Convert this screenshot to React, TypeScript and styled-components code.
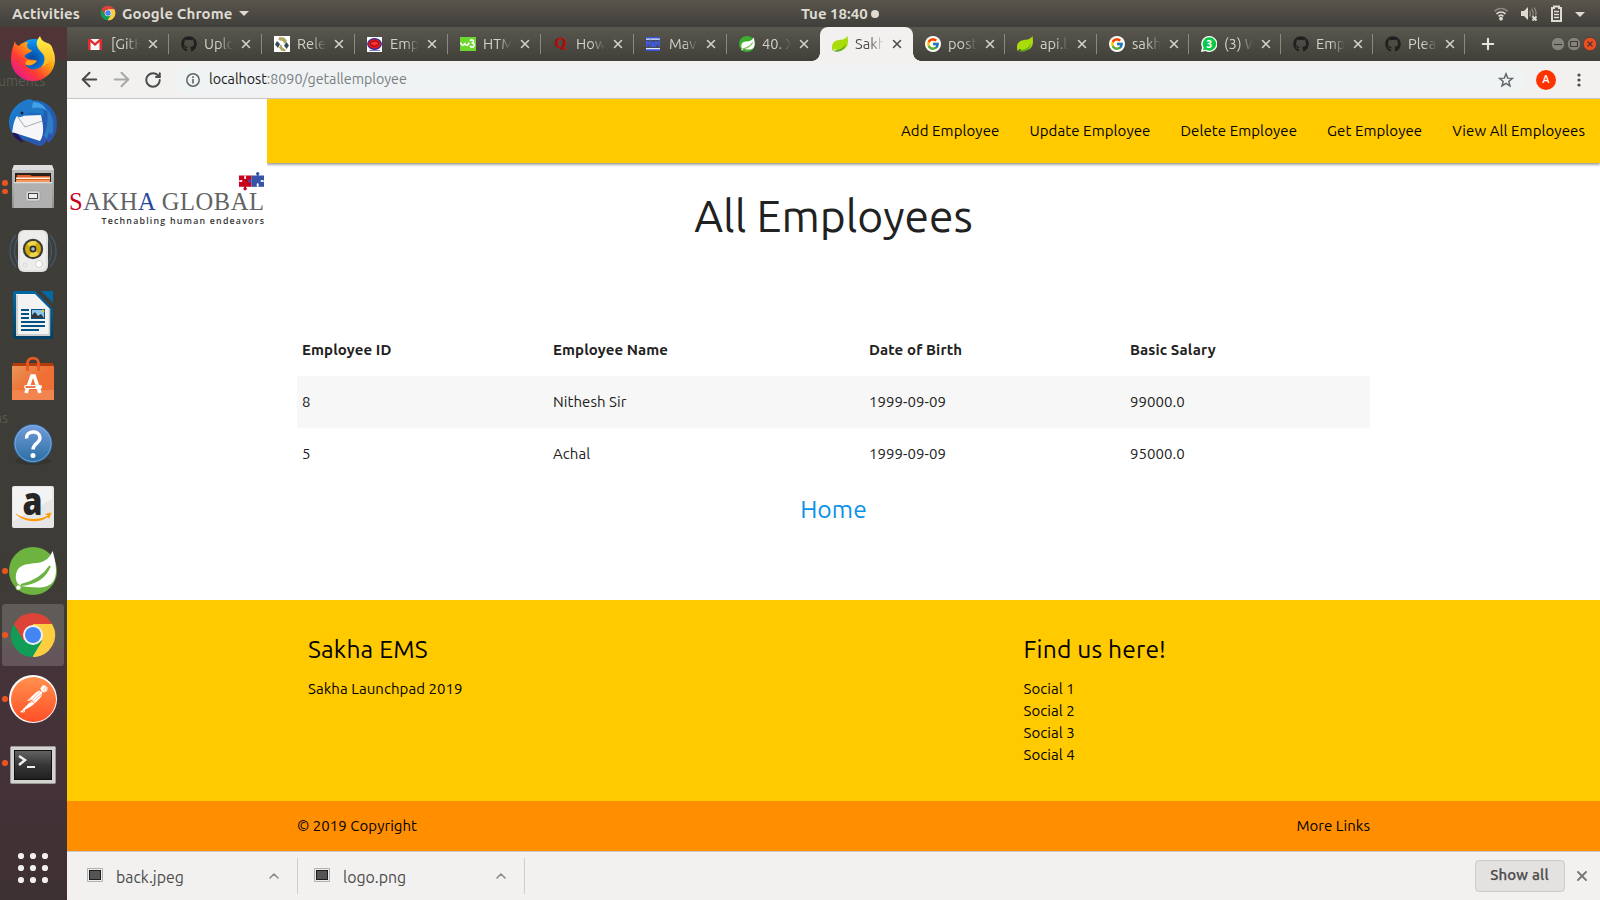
import React from "react";
import styled, { createGlobalStyle, css } from "styled-components";
import { FaGithub } from "react-icons/fa";
import { FcGoogle } from "react-icons/fc";
import { SiPostman } from "react-icons/si";
import { ArrowLeft, ArrowRight, ChevronUp, Plus, RotateCw, X } from "lucide-react";

const GlobalStyle = createGlobalStyle`
  * { box-sizing: border-box; }
  html, body { margin: 0; padding: 0; overflow: hidden; }
  body { font-family: Ubuntu, "Noto Sans", "Open Sans", sans-serif; font-size: 15px; color: #212121; background: #fff; }
  svg { display: block; flex: none; }
`;

const Desktop = styled.div`
  width: 1600px;
  height: 900px;
  display: flex;
  flex-direction: column;
`;

/* ---------- top panel ---------- */

const Panel = styled.header`
  height: 27px;
  flex: none;
  display: grid;
  grid-template-columns: 789px auto 1fr;
  align-items: center;
  padding: 0 15px 0 12px;
  background: linear-gradient(#59554d, #403f3a);
  color: #dfdbd2;
  font-size: 15px;
  font-weight: 600;
`;
const PanelGroup = styled.div<{ $end?: boolean }>`
  display: flex;
  align-items: center;
  justify-content: ${(p) => (p.$end ? "flex-end" : "flex-start")};
`;
const PanelLabel = styled.span<{ $gap?: number; $track?: number }>`
  margin-left: ${(p) => p.$gap ?? 0}px;
  letter-spacing: ${(p) => p.$track ?? 0.12}px;
  line-height: 17px;
  padding-bottom: 1px;
  white-space: nowrap;
`;
const Caret = styled.i`
  border: 5px solid transparent;
  border-top-color: #dfdbd2;
  border-bottom: 0;
  margin-left: 6px;
`;
const NoticeDot = styled.i`
  width: 8px;
  height: 8px;
  border-radius: 50%;
  margin-left: 3px;
  background: #dfdbd2;
`;

/* ---------- dock ---------- */

const Workspace = styled.div`
  flex: 1;
  min-height: 0;
  display: flex;
`;
const Dock = styled.nav`
  position: relative;
  width: 67px;
  flex: none;
  display: flex;
  flex-direction: column;
  background: linear-gradient(#513436 0, #4e3537 32px, #3f3d37 34px, #3e3c37 520px, #403a37 619px, #45333a 622px, #443238 750px, #3d3032 100%);
`;
const Slot = styled.div<{ $active?: boolean }>`
  height: 62px;
  margin: 1px 3px 1px 2px;
  display: flex;
  align-items: center;
  justify-content: center;
  position: relative;
  border-radius: 3px;
  ${(p) => p.$active && css`background: rgba(255, 255, 255, 0.17);`}
`;
const Running = styled.div`
  position: absolute;
  left: 0;
  top: 0;
  height: 100%;
  display: flex;
  flex-direction: column;
  justify-content: center;
  gap: 3px;
`;
const Dot = styled.i`
  width: 5.5px;
  height: 5.5px;
  border-radius: 50%;
  background: #e95420;
`;
const AppsSlot = styled(Slot)`
  margin-top: auto;
`;
const Ghost = styled.span<{ $top: number; $left: number }>`
  position: absolute;
  top: ${(p) => p.$top}px;
  left: ${(p) => p.$left}px;
  color: #5b5953;
  font-size: 14px;
  line-height: 16px;
`;

/* ---------- browser ---------- */

const Browser = styled.main`
  flex: 1;
  min-width: 0;
  display: flex;
  flex-direction: column;
  background: #fff;
`;
const TabStrip = styled.div`
  height: 34px;
  flex: none;
  display: flex;
  align-items: center;
  padding-left: 9px;
  background: linear-gradient(#59574e, #403f39);
`;
const TabBox = styled.div<{ $active?: boolean; $narrow?: boolean; $plain?: boolean }>`
  position: relative;
  width: ${(p) => (p.$narrow ? 92 : 93)}px;
  height: 34px;
  flex: none;
  display: flex;
  align-items: center;
  padding-left: 12px;
  color: ${(p) => (p.$active ? "#4c4c4c" : "#d3d0c8")};
  &::after {
    content: "";
    position: absolute;
    right: 0;
    top: 7px;
    height: 20px;
    width: 1px;
    background: ${(p) => (p.$active || p.$plain ? "transparent" : "#8b8981")};
  }
  ${(p) =>
    p.$active &&
    css`
      background: #f2f1f0;
      border-radius: 8px 8px 0 0;
      &::before, &::after {
        content: "";
        position: absolute;
        top: auto;
        bottom: 0;
        width: 8px;
        height: 8px;
      }
      &::before { left: -8px; background: radial-gradient(circle at 0 0, transparent 7.5px, #f2f1f0 8px); }
      &::after { right: -8px; background: radial-gradient(circle at 100% 0, transparent 7.5px, #f2f1f0 8px); }
    `}
`;
const Favicon = styled.span`
  width: 16px;
  height: 16px;
  flex: none;
`;
const TabTitle = styled.span`
  width: 29px;
  margin-left: 7px;
  overflow: hidden;
  white-space: nowrap;
  font-size: 14.67px;
  line-height: 20px;
  -webkit-mask-image: linear-gradient(90deg, #000 52%, transparent);
  mask-image: linear-gradient(90deg, #000 52%, transparent);
`;
const TabClose = styled(X)`
  margin-left: 6px;
`;
const NewTab = styled(Plus)`
  margin-left: 14px;
  color: #e8e5de;
`;
const WindowButtons = styled.div`
  margin-left: auto;
  display: flex;
  gap: 2px;
  padding-right: 3.5px;
`;
const Toolbar = styled.div`
  height: 38px;
  flex: none;
  display: flex;
  align-items: center;
  padding: 0 14px 0 10px;
  background: #f2f1f0;
  border-bottom: 1px solid #c6c6c6;
  color: #4a4a4a;
`;
const ToolIcons = styled.div`
  width: 98px;
  display: grid;
  grid-template-columns: 24px 24px 24px;
  gap: 8px;
  align-items: center;
  justify-items: center;
  flex: none;
`;
const Omnibox = styled.div`
  flex: 1;
  height: 30px;
  margin-right: 12px;
  display: flex;
  align-items: center;
  padding: 0 10px;
  border-radius: 15px;
  background: #eff3f4;
  color: #7b7f82;
  font-size: 14.3px;
  letter-spacing: -0.04px;
`;
const Url = styled.span`
  flex: 1;
  margin-left: 8px;
  padding-bottom: 2px;
`;
const Host = styled.span`
  color: #222;
`;
const Avatar = styled.div`
  width: 20px;
  height: 20px;
  border-radius: 50%;
  background: #ff3300;
  color: #fff;
  font: 500 11px/20px Roboto, sans-serif;
  text-align: center;
  margin-right: 16px;
`;

/* ---------- web page ---------- */

const Page = styled.section`
  height: 752px;
  flex: none;
  display: flex;
  flex-direction: column;
`;
const Masthead = styled.div`
  height: 64px;
  flex: none;
  display: flex;
  align-items: flex-start;
`;
const LogoBox = styled.div`
  width: 200px;
  height: 140px;
  flex: none;
  background: #fff;
`;
const NavBar = styled.ul`
  flex: 1;
  height: 64px;
  margin: 0;
  padding: 0;
  list-style: none;
  display: flex;
  justify-content: flex-end;
  background: #ffca00;
  box-shadow: 0 2px 2px rgba(0, 0, 0, 0.22), 0 1px 3px rgba(0, 0, 0, 0.25);
  clip-path: inset(0 0 -6px 0);
`;
const NavItem = styled.li`
  padding: 0 15px;
  line-height: 64px;
  color: #000;
  letter-spacing: 0.09px;
`;
const Body = styled.div`
  width: 1073px;
  margin: 0 auto;
  flex: 1;
  display: flex;
  flex-direction: column;
  align-items: center;
`;
const Heading = styled.h1`
  margin: 27px 0 0;
  height: 52px;
  line-height: 52px;
  font-size: 44.4px;
  font-weight: 400;
`;
const Table = styled.table`
  width: 100%;
  margin-top: 82px;
  border-collapse: collapse;
  table-layout: fixed;
`;
const Row = styled.tr<{ $striped?: boolean }>`
  height: 52px;
  background: ${(p) => (p.$striped ? "#f7f7f7" : "transparent")};
`;
const Head = styled.th<{ $w: number }>`
  width: ${(p) => p.$w}px;
  padding: 0 5px 2px;
  text-align: left;
  font-size: 15px;
  letter-spacing: 0.1px;
`;
const Cell = styled.td`
  padding: 0 5px 2px;
  letter-spacing: 0.06px;
`;
const HomeLink = styled.a`
  margin-top: 12px;
  font-size: 24.6px;
  line-height: 34px;
  letter-spacing: 0.1px;
  color: #0b92e8;
`;
const Footer = styled.footer`
  height: 201px;
  flex: none;
  padding: 32px 241px 0;
  display: grid;
  grid-template-columns: 715.5px 1fr;
  background: #ffca00;
  color: #000;
`;
const FooterTitle = styled.h5`
  margin: 0 0 12px;
  font-size: 24.6px;
  font-weight: 400;
  line-height: 34px;
  letter-spacing: 0.15px;
`;
const FooterLine = styled.div`
  line-height: 22px;
  letter-spacing: 0.06px;
`;
const Copyright = styled.div`
  height: 50px;
  flex: none;
  padding: 0 230px 1px;
  display: flex;
  justify-content: space-between;
  align-items: center;
  background: #ff8f00;
  color: #000;
  letter-spacing: 0.04px;
`;

/* ---------- downloads ---------- */

const Downloads = styled.div`
  flex: 1;
  display: flex;
  align-items: center;
  border-top: 1px solid #c9c8c6;
  background: #f2f1f0;
  color: #4c4c4c;
`;
const DownloadItem = styled.div<{ $w: number; $lead: number }>`
  width: ${(p) => p.$w}px;
  height: 36px;
  display: flex;
  align-items: center;
  padding: 0 15px 0 ${(p) => p.$lead}px;
  border-right: 1px solid #cfcecc;
  font-size: 15.9px;
`;
const FileName = styled.span`
  flex: 1;
  margin-left: 13px;
  padding-top: 1px;
`;
const ShowAll = styled.button`
  width: 90px;
  height: 32px;
  margin: 0 0 1px auto;
  padding: 0 0 2px;
  border: 1px solid #cccbc9;
  border-radius: 4px;
  background: #e4e2e0;
  color: #4c4c4c;
  font: 500 15px Ubuntu, "Noto Sans", sans-serif;
  letter-spacing: 0.2px;
  -webkit-text-stroke: 0.25px #4c4c4c;
`;
const BarClose = styled(X)`
  margin: 0 10px 0 9.5px;
  color: #777;
`;

/* ---------- drawings ---------- */

const ChromeLogo = ({ size }: { size: number }) => (
  <svg width={size} height={size} viewBox="0 0 48 48">
    <path d="M24 24 4.900 13A22 22 0 0 1 43.100 13Z" fill="#db4437" />
    <path d="M24 24V13H43.100A22 22 0 0 1 24 46Z" fill="#ffcd40" />
    <path d="M14.500 29.500 4.900 13A22 22 0 0 0 23.500 46L33.500 29.500Z" fill="#0f9d58" />
    <path d="M4.900 13 14.500 29.500 24 13Z" fill="#db4437" />
    <path d="M33.500 29.500 24 46A22 22 0 0 0 43.100 14H24Z" fill="#ffcd40" />
    <circle cx="24" cy="24" r="10" fill="#f1f1f1" />
    <circle cx="24" cy="24" r="8" fill="#4285f4" />
  </svg>
);

const FirefoxLogo = () => (
  <svg width="48" height="48" viewBox="0 0 48 48">
    <defs>
      <linearGradient id="ffx" x1="1" y1="0" x2="0.1" y2="0.9">
        <stop offset="0.1" stopColor="#fff44f" />
        <stop offset="0.4" stopColor="#ffa010" />
        <stop offset="0.7" stopColor="#ff3a35" />
        <stop offset="1" stopColor="#e3169a" />
      </linearGradient>
      <radialGradient id="ffb" cx="0.45" cy="0.6" r="0.6">
        <stop offset="0" stopColor="#06439b" />
        <stop offset="1" stopColor="#0a9dff" />
      </radialGradient>
      <linearGradient id="ffy" x1="0" y1="0" x2="0" y2="1">
        <stop offset="0" stopColor="#fff44f" />
        <stop offset="1" stopColor="#ffaf14" />
      </linearGradient>
    </defs>
    <circle cx="25" cy="21" r="17" fill="url(#ffb)" />
    <path d="M6 6C4 12 2 17 2 25a22 21 0 0 0 44 0c0-8-3-13-7-17 2 9 0 17-5 22-5 6-15 6-18-1 4 2 8 0 12-3-3-2-6-1-9-2-2-1-4-2-3-4l7-4c-1-2-5-1-5-6l1-3c-4 0-7 1-9 4-3-1-4-3-4-5z" fill="url(#ffx)" />
    <path d="M31 1c-6 7-3 12 2 17 4 4 3 10-1 14 10-3 14-12 11-20-1-3-5-4-7-5-3-1-4-3-5-6z" fill="url(#ffy)" />
    <path d="M16 29c4 3 9 1 12-3-4-1-6 0-10-1z" fill="#ffa21c" />
  </svg>
);

const ThunderbirdLogo = () => (
  <svg width="48" height="48" viewBox="0 0 48 48">
    <defs>
      <linearGradient id="tb" x1="0" y1="0" x2="1" y2="1">
        <stop offset="0" stopColor="#1b8bdc" />
        <stop offset="0.5" stopColor="#1d60b8" />
        <stop offset="1" stopColor="#3550a8" />
      </linearGradient>
    </defs>
    <path d="M0 24C0 11 10 2 21 0l3 1.500C38 1 48 12 48 24c0 10-4 17-9 20l-1-3c-2 4-5 6-8 6L5 37C2 33 0 29 0 24z" fill="url(#tb)" />
    <path d="M3 34c3 6 8 9 12 9L8 34z" fill="#24165f" />
    <path d="M3 35C4 27 5 21 8 17l24-1c2 9 4 19-1 26L3 33z" fill="#f6f6f8" />
    <path d="M8 17 16 28l17-6" fill="none" stroke="#a9abb2" strokeWidth="1" />
    <path d="M9 18c0-8 5-15 11-18l3 2c9 1 12 8 12 15-7-4-12-4-16-3-3 1-5 5-10 4z" fill="#1f78c8" />
    <path d="M24 3c7 0 12 4 14 9-5-4-10-4-15-3z" fill="#45a1e6" />
    <path d="M38 10c6 6 8 15 5 26l-3-3-2 7-3-3c4-9 4-18 3-27z" fill="#2f7cc4" />
    <circle cx="13" cy="14" r="1.500" fill="#10213d" />
  </svg>
);

const FilesLogo = () => (
  <svg width="48" height="48" viewBox="0 0 48 48">
    <defs>
      <linearGradient id="fl" x1="0" y1="0" x2="0" y2="1">
        <stop offset="0" stopColor="#c4c4c4" />
        <stop offset="1" stopColor="#8f8f8f" />
      </linearGradient>
    </defs>
    <path d="M5 2h38l2 6v37H3V8z" fill="url(#fl)" />
    <path d="M5 2h38l2 5H3z" fill="#dedede" />
    <rect x="6" y="10" width="36" height="10" fill="#2c211b" />
    <path d="M8 12h13l2 1h18v8H7z" fill="#e0602c" />
    <path d="M7 14.500h34v1.500H7z" fill="#fff0d8" />
    <path d="M7 17h34v3H7z" fill="#f0995a" />
    <rect x="5" y="19" width="38" height="26" fill="#b0b0b0" />
    <path d="M5 19h38v1.200H5z" fill="#dedede" />
    <rect x="17" y="28" width="14" height="10" rx="2" fill="#d7d7d7" stroke="#9a9a9a" strokeWidth="0.600" />
    <rect x="19.500" y="30.500" width="9" height="5" fill="#eee" stroke="#444" />
  </svg>
);

const SpeakerLogo = () => (
  <svg width="48" height="48" viewBox="0 0 48 48">
    <g fill="none" stroke="#44586c" strokeWidth="1.400">
      <path d="M7 8c-8 9-8 23 0 32M10 10c-6 8-6 20 0 28M41 8c8 9 8 23 0 32M38 10c6 8 6 20 0 28" />
    </g>
    <rect x="9" y="3" width="30" height="42" rx="6" fill="#e0e0de" />
    <rect x="11" y="4" width="26" height="39" rx="5" fill="#f5f5f4" opacity=".6" />
    <circle cx="24" cy="22" r="10.200" fill="#3d3c3a" />
    <circle cx="24" cy="22" r="8" fill="#cfaa0c" />
    <path d="M18 17a8 8 0 0 1 10-2l-4 7zM30 27a8 8 0 0 1-10 2l4-7z" fill="#eed64a" />
    <circle cx="24" cy="22" r="3.400" fill="#2d2e30" />
    <circle cx="24" cy="22" r="1.800" fill="#aebac6" />
    <circle cx="30" cy="37" r="3.500" fill="#fff" stroke="#c8c8c8" strokeWidth="0.800" />
    <circle cx="16" cy="38" r="2" fill="none" stroke="#d4d4d4" strokeWidth="0.700" />
  </svg>
);

const WriterLogo = () => (
  <svg width="48" height="48" viewBox="0 0 48 48">
    <defs>
      <linearGradient id="wr" x1="0" y1="0" x2="0" y2="1">
        <stop offset="0" stopColor="#0369a3" />
        <stop offset="1" stopColor="#013f66" />
      </linearGradient>
    </defs>
    <path d="M6 0h20l18 18v28a2 2 0 0 1-2 2H6a2 2 0 0 1-2-2V2a2 2 0 0 1 2-2z" fill="url(#wr)" />
    <path d="M32 0h12v12z" fill="#0369a3" />
    <path d="M7 3h19l15 15v27H7z" fill="#f3f3f3" />
    <path d="M8 44V4M7 44h33.500V18" fill="none" stroke="#c3c3c3" strokeWidth="1.500" />
    <path d="M12 19h8M12 23h8M12 27h8M12 31h24M12 35h24M12 39h18" stroke="#055285" strokeWidth="2" />
    <rect x="22.500" y="18.500" width="13" height="9" fill="#89c7ee" stroke="#055285" />
    <path d="M23 27v-3l3-3 3 4 3-2 3 4z" fill="#31373b" />
    <circle cx="34" cy="20" r="1.500" fill="#e5c34f" />
  </svg>
);

const SoftwareLogo = () => (
  <svg width="48" height="48" viewBox="0 0 48 48">
    <defs>
      <linearGradient id="sw" x1="0" y1="0" x2="1" y2="1">
        <stop offset="0" stopColor="#e8975a" />
        <stop offset="0.500" stopColor="#ef6f33" />
        <stop offset="1" stopColor="#ee7038" />
      </linearGradient>
    </defs>
    <path d="M4 8h40l1 4H3z" fill="#b43c0c" />
    <path d="M3 11h42v34H3z" fill="url(#sw)" />
    <path d="M3 35h42v10H3z" fill="#f28450" />
    <path d="M18.500 16V8c0-6.500 11-6.500 11 0v8" fill="none" stroke="#e95a22" strokeWidth="2.800" />
    <path d="M17 38 22.800 21h2.400L31 38" fill="none" stroke="#fff" strokeWidth="3.600" />
    <rect x="15" y="30" width="18" height="4" rx="2" fill="#fff" />
    <rect x="16.500" y="31.200" width="10" height="1.600" fill="#e95a22" />
  </svg>
);

const HelpLogo = () => (
  <svg width="48" height="48" viewBox="0 0 48 48">
    <defs>
      <linearGradient id="hp" x1="0" y1="0" x2="0" y2="1">
        <stop offset="0" stopColor="#739ddb" />
        <stop offset="1" stopColor="#2a6da2" />
      </linearGradient>
    </defs>
    <ellipse cx="24" cy="42" rx="18" ry="4" fill="#2c2b28" opacity=".5" />
    <circle cx="24" cy="24.500" r="19" fill="url(#hp)" stroke="#2b6093" />
    <circle cx="24" cy="24.500" r="18" fill="none" stroke="#8db7e4" strokeWidth="0.700" />
    <path d="M17.500 19.500c-1-8 13-9 13.500-1 .3 5.500-7 6-7 12" fill="none" stroke="#fff" strokeWidth="3.400" />
    <circle cx="24" cy="36.500" r="2.500" fill="#fff" />
  </svg>
);

const AmazonLogo = () => (
  <svg width="48" height="48" viewBox="0 0 48 48">
    <rect x="3" y="3" width="42" height="42" rx="2" fill="#e6e6e6" />
    <path d="M5 4h38v12L4 38V5z" fill="#f3f3f3" />
    <text x="23.500" y="31.500" textAnchor="middle" fontFamily="Open Sans, sans-serif" fontWeight="800" fontSize="39" textLength="20" lengthAdjust="spacingAndGlyphs" fill="#252525">a</text>
    <path d="M6 30c9 7 23 8 33 2.500L36 31l6.500-1.500L40 36l-1-2C30 41 13 39 6 30z" fill="#ff9900" />
  </svg>
);

const SpringLogo = ({ size }: { size: number }) => (
  <svg width={size} height={size} viewBox="0 0 48 48">
    <circle cx="24" cy="24" r="24" fill={size > 20 ? "#6db33f" : "#3cae2d"} />
    <path d="M43.500 4C41 10 37 15 28 16c-9 1-17 1-20 8-3 7 0 14 4 15 9 1 28 5 33-6C49 25 46 11 43.500 4z" fill="#fff" />
    <path d="M41 19c-5 13-15 18-29 19 13-3 22-8 29-19z" fill="#6db33f" stroke="#6db33f" strokeWidth="1.800" />
    <circle cx="9.500" cy="40.500" r="2.600" fill="#fff" stroke="#6db33f" strokeWidth=".8" />
  </svg>
);

const PostmanBadge = styled.div`
  width: 48px;
  height: 48px;
  border-radius: 50%;
  background: #fff;
  display: flex;
  align-items: center;
  justify-content: center;
`;
const PostmanMark = styled(SiPostman)`
  fill: url(#pm);
`;
const PostmanLogo = () => (
  <PostmanBadge>
    <svg width="0" height="0">
      <linearGradient id="pm" x1="0" y1="0" x2="0" y2="1">
        <stop offset="0" stopColor="#ff914d" />
        <stop offset="1" stopColor="#ff4f27" />
      </linearGradient>
    </svg>
    <PostmanMark size={45} />
  </PostmanBadge>
);

const TerminalLogo = () => (
  <svg width="48" height="48" viewBox="0 0 48 48">
    <defs>
      <linearGradient id="tm" x1="0" y1="0" x2="0" y2="1">
        <stop offset="0" stopColor="#626262" />
        <stop offset="0.500" stopColor="#363636" />
        <stop offset="1" stopColor="#202020" />
      </linearGradient>
    </defs>
    <rect x="1.500" y="7.500" width="45" height="37" rx="1" fill="#d3d3d1" stroke="#9b9b98" />
    <rect x="5" y="11" width="38" height="30" fill="#111" />
    <rect x="6" y="12" width="36" height="28" fill="url(#tm)" />
    <path d="m10 17 6 4-6 5" fill="none" stroke="#eee" strokeWidth="2.500" />
    <path d="M18 28h8" stroke="#eee" strokeWidth="2" />
  </svg>
);

const AppsGrid = () => (
  <svg width="48" height="48" viewBox="0 0 48 48" fill="#f2f0ee">
    {[12, 24, 36].map((y) => [12, 24, 36].map((x) => <circle key={`${x}-${y}`} cx={x} cy={y} r="3.100" />))}
  </svg>
);

const SakhaLogo = () => (
  <svg width="200" height="140" viewBox="0 0 200 140">
    <g fill="#c8001e">
      <rect x="172" y="76.500" width="12.500" height="11.300" />
      <rect x="177.300" y="87" width="1.600" height="3" />
      <circle cx="178.100" cy="89.700" r="1.700" />
    </g>
    <g fill="#3753a8">
      <rect x="184.500" y="76.500" width="12.500" height="11.300" />
      <rect x="189.900" y="74.500" width="1.600" height="3" />
      <circle cx="190.700" cy="74.600" r="1.700" />
      <circle cx="182.600" cy="82" r="1.600" />
    </g>
    <g fill="#fff">
      <rect x="177.300" y="76.500" width="1.600" height="2" />
      <circle cx="178.100" cy="79" r="1.100" />
      <rect x="172" y="81.400" width="2" height="1.300" />
      <circle cx="174.300" cy="82" r="1.100" />
      <rect x="189.900" y="86" width="1.600" height="1.800" />
      <circle cx="190.700" cy="85.400" r="1.100" />
      <rect x="195" y="81.400" width="2" height="1.300" />
      <circle cx="194.700" cy="82" r="1.100" />
    </g>
    <text x="2" y="111" fontFamily="Liberation Serif, serif" fontSize="24.500" textLength="195" fill="#626365">
      <tspan fill="#c8001e">S</tspan>AKH<tspan fill="#27479f">A</tspan> GLOBAL
    </text>
    <text x="34.500" y="125" fontFamily="Open Sans, sans-serif" fontWeight="600" fontSize="8.800" textLength="162.500" fill="#333">Technabling human endeavors</text>
  </svg>
);

const LeafIcon = () => (
  <svg width="16" height="16" viewBox="0 0 16 16">
    <path d="M15.500 0c1 6 1 12-5 14-3 1-6 0-8-1l-2 2c-1-4-1-8 3-10 4-2 9 0 12-5z" fill="#aadb0b" />
    <path d="M1 14.500c6 0 10-2 13-7-1 6-6 9-11 8z" fill="#5caa23" />
  </svg>
);
const GmailIcon = () => (
  <svg width="16" height="16" viewBox="0 0 16 16">
    <path d="M0 3h14v11H0z" fill="#f5f5f5" />
    <path d="M0 3h2.500L7 7l4.500-4H14v11h-2.500V6L7 10 2.500 6v8H0z" fill="#e12b2d" />
  </svg>
);
const GitHubIcon = () => <FaGithub size={16} color="#202020" />;
const GoogleBadge = styled.span`
  width: 16px;
  height: 16px;
  border-radius: 50%;
  background: #fff;
  display: flex;
  align-items: center;
  justify-content: center;
`;
const GoogleIcon = () => (
  <GoogleBadge>
    <FcGoogle size={14} />
  </GoogleBadge>
);
const HexIcon = () => (
  <svg width="16" height="16" viewBox="0 0 16 16">
    <path d="M0 0h16v16H0z" fill="#fff" />
    <path d="m5 1 5 0.500 3 3-2 3.500-2.500-3-4-1z" fill="#b3a767" />
    <path d="m3 5 3 3-2 4-3-3.500z" fill="#344c57" />
    <path d="m12.500 6 2.500 3.500-2.500 3.500-2.500-3.500z" fill="#344c57" />
    <path d="m7 8 1.500 3.500L12 14l-1 1.500-4-1-2-3z" fill="#b3a767" />
  </svg>
);
const RedRingIcon = () => (
  <svg width="15" height="16" viewBox="0 0 15 16">
    <path d="M0 1h15v15H0z" fill="#fff" />
    <ellipse cx="7.500" cy="8" rx="6.800" ry="5.400" fill="#e41818" stroke="#262ea8" strokeWidth="1.200" />
    <path d="M3 7c3-2.500 6-2.500 9 0-2 4-7 4-9 0z" fill="#f33" stroke="#8c0c0c" />
    <path d="M2 14.500h11" stroke="#777fc8" strokeWidth="1" />
  </svg>
);
const W3Icon = () => (
  <svg width="16" height="16" viewBox="0 0 16 16">
    <path d="M0 1h16v14H0z" fill="#6bd72f" />
    <path d="M.8 6.500c.5 3.500 3.500 3.500 4 .5.500 3 3.500 3 4.200-.5M10 4.700c1.500-1.500 4-.8 3.600 1-.2 1.200-1 1.400-2 1.400 2 0 3 .8 2.600 2.500-.5 2-3.200 2-4.200.4" fill="none" stroke="#fff" strokeWidth="1.600" />
  </svg>
);
const QuoraIcon = () => (
  <svg width="16" height="16" viewBox="0 0 16 16">
    <text x="1.500" y="12.300" fontFamily="Liberation Serif, serif" fontWeight="700" fontSize="15.500" fill="#b00d08" stroke="#b00d08" strokeWidth=".4">Q</text>
  </svg>
);
const MvnIcon = () => (
  <svg width="16" height="16" viewBox="0 0 16 16">
    <path d="M0 1h14v14H0z" fill="#3553d8" />
    <path d="M0 2.500h14v1.200H0zM0 12h14v1.200H0z" fill="#e6e9ee" />
    <path d="M0 4h14v8H0z" fill="#474a50" />
    <path d="M.7 11V5l1.600 3L4 5v6M6 5v6l2-5v5M9.700 11V5l1.600 3L13.300 5v6" fill="none" stroke="#3f5cf1" strokeWidth="1.200" />
  </svg>
);
const WhatsAppIcon = () => (
  <svg width="16" height="16" viewBox="0 0 16 16">
    <path d="M8 0a8 8 0 1 1-3.500 15L0 16l1-4.500A8 8 0 0 1 8 0z" fill="#fff" />
    <path d="M8 1.300A6.700 6.700 0 1 1 5 13.700l-3 .6.700-2.800A6.700 6.700 0 0 1 8 1.300z" fill="#0cc947" />
    <text x="8" y="11.500" textAnchor="middle" fontFamily="Open Sans, sans-serif" fontWeight="700" fontSize="10" fill="#fff">3</text>
  </svg>
);

const StatusIcons = () => (
  <svg width="92" height="20" viewBox="0 0 92 20" fill="#dfdbd2">
    <g fill="none" stroke="#dfdbd2" strokeWidth="1.700">
      <path d="M1.500 7.500c3.500-4 9.500-4 13 0" opacity=".4" />
      <path d="M3.500 10c2.500-2.700 6.500-2.700 9 0M5.600 12.300c1.500-1.500 3.300-1.500 4.800 0" />
    </g>
    <circle cx="8" cy="14.700" r="1.900" />
    <path d="M28 7h3l4-4v13l-4-4h-3z" />
    <path d="M36.500 7c1 1.500 1 4 0 5.500M38.500 5c2 2.500 2 6 .5 8M41 3.500c2 3 2.500 6 1.500 8" fill="none" stroke="#dfdbd2" opacity=".45" strokeWidth="1.300" />
    <path d="m39.500 12.500 4 4m0-4-4 4" stroke="#dfdbd2" strokeWidth="2" />
    <path d="M59 4h2V2.500h5V4h2v13h-9z" fill="none" stroke="#dfdbd2" strokeWidth="2" />
    <path d="M61 7.500h5M61 10.500h5M61 13.500h5" stroke="#dfdbd2" strokeWidth="1.500" />
    <path d="M82 8h10l-5 5z" />
  </svg>
);

const WindowButton = ({ kind }: { kind: "min" | "max" | "close" }) => (
  <svg width="14" height="14" viewBox="0 0 14 14">
    <circle cx="7" cy="7" r="6.600" fill={kind === "close" ? "#ee4e21" : "#85837b"} stroke="#393833" strokeWidth=".5" />
    <g fill="none" stroke="#3b3a35" strokeWidth="1.100">
      {kind === "min" && <path d="M3 7.500h8" />}
      {kind === "max" && <path d="M3.500 4.500h7v5h-7z" />}
      {kind === "close" && <path d="m4.500 4.500 5 5m0-5-5 5" />}
    </g>
  </svg>
);

const InfoIcon = () => (
  <svg width="16" height="16" viewBox="0 0 16 16">
    <circle cx="8" cy="8" r="6.200" fill="none" stroke="#5f6368" strokeWidth="1.500" />
    <path d="M8 7v4.500M8 4.200v1.700" stroke="#5f6368" strokeWidth="1.600" />
  </svg>
);
const StarIcon = () => (
  <svg width="16" height="16" viewBox="0 0 16 16">
    <path d="m8 1.800 1.700 4.300 4.700.3-3.600 3 1.200 4.500L8 11.400l-4 2.500 1.200-4.500-3.600-3 4.700-.3z" fill="none" stroke="#5f6368" strokeWidth="1.400" />
  </svg>
);
const MenuDots = () => (
  <svg width="14" height="14" viewBox="0 0 14 14" fill="#4a4a4a">
    <circle cx="7" cy="2" r="1.600" />
    <circle cx="7" cy="7" r="1.600" />
    <circle cx="7" cy="12" r="1.600" />
  </svg>
);
const ThumbIcon = () => (
  <svg width="18" height="16" viewBox="0 0 18 16">
    <path d="M2.500 0.500h15v13h-15z" fill="#eee" stroke="#b0b0ae" />
    <path d="M4 2h12v10H4z" fill="#1e1e1e" />
    <path d="M5 3h10v8H5z" fill="#555" />
  </svg>
);

/* ---------- data ---------- */

const dockApps: { icon: React.ReactNode; running?: number; active?: boolean }[] = [
  { icon: <FirefoxLogo /> },
  { icon: <ThunderbirdLogo /> },
  { icon: <FilesLogo />, running: 2 },
  { icon: <SpeakerLogo /> },
  { icon: <WriterLogo /> },
  { icon: <SoftwareLogo /> },
  { icon: <HelpLogo /> },
  { icon: <AmazonLogo /> },
  { icon: <SpringLogo size={48} />, running: 1 },
  { icon: <ChromeLogo size={48} />, running: 1, active: true },
  { icon: <PostmanLogo />, running: 1 },
  { icon: <TerminalLogo />, running: 1 },
];

const tabs: [React.ReactNode, string][] = [
  [<GmailIcon />, "[GitH"],
  [<GitHubIcon />, "Uplo"],
  [<HexIcon />, "Rele"],
  [<RedRingIcon />, "Emp"],
  [<W3Icon />, "HTM"],
  [<QuoraIcon />, "How"],
  [<MvnIcon />, "Mav"],
  [<SpringLogo size={16} />, "40. X"],
  [<LeafIcon />, "Sakh"],
  [<GoogleIcon />, "post"],
  [<LeafIcon />, "api.l"],
  [<GoogleIcon />, "sakh"],
  [<WhatsAppIcon />, "(3) W"],
  [<GitHubIcon />, "Emp"],
  [<GitHubIcon />, "Plea"],
];
const activeTab = 8;

const links = ["Add Employee", "Update Employee", "Delete Employee", "Get Employee", "View All Employees"];
const columns: [string, number][] = [
  ["Employee ID", 251],
  ["Employee Name", 316],
  ["Date of Birth", 261],
  ["Basic Salary", 245],
];
const employees = [
  ["8", "Nithesh Sir", "1999-09-09", "99000.0"],
  ["5", "Achal", "1999-09-09", "95000.0"],
];
const socials = ["Social 1", "Social 2", "Social 3", "Social 4"];
const files: [string, number, number][] = [
  ["back.jpeg", 231, 18],
  ["logo.png", 227, 14],
];

export default function App() {
  return (
    <Desktop>
      <GlobalStyle />
      <Panel>
        <PanelGroup>
          <PanelLabel>Activities</PanelLabel>
          <PanelLabel $gap={20}>
            <ChromeLogo size={16} />
          </PanelLabel>
          <PanelLabel $gap={6}>Google Chrome</PanelLabel>
          <Caret />
        </PanelGroup>
        <PanelGroup>
          <PanelLabel $track={0}>Tue 18:40</PanelLabel>
          <NoticeDot />
        </PanelGroup>
        <PanelGroup $end>
          <StatusIcons />
        </PanelGroup>
      </Panel>
      <Workspace>
        <Dock>
          <Ghost $top={46} $left={-2}>uments</Ghost>
          <Ghost $top={383} $left={-6}>ns</Ghost>
          {dockApps.map((app, i) => (
            <Slot key={i} $active={app.active}>
              {app.icon}
              {app.running && (
                <Running>
                  {Array.from({ length: app.running }, (_, n) => (
                    <Dot key={n} />
                  ))}
                </Running>
              )}
            </Slot>
          ))}
          <AppsSlot>
            <AppsGrid />
          </AppsSlot>
        </Dock>
        <Browser>
          <TabStrip>
            {tabs.map(([icon, title], i) => (
              <TabBox key={i} $active={i === activeTab} $narrow={i > activeTab} $plain={i === activeTab - 1}>
                <Favicon>{icon}</Favicon>
                <TabTitle>{title}</TabTitle>
                <TabClose size={14} strokeWidth={2.6} />
              </TabBox>
            ))}
            <NewTab size={18} strokeWidth={2.8} />
            <WindowButtons>
              <WindowButton kind="min" />
              <WindowButton kind="max" />
              <WindowButton kind="close" />
            </WindowButtons>
          </TabStrip>
          <Toolbar>
            <ToolIcons>
              <ArrowLeft size={23} strokeWidth={2.1} />
              <ArrowRight size={23} strokeWidth={2.1} color="#a8a8a8" />
              <RotateCw size={18} strokeWidth={2.6} />
            </ToolIcons>
            <Omnibox>
              <InfoIcon />
              <Url>
                <Host>localhost</Host>:8090/getallemployee
              </Url>
              <StarIcon />
            </Omnibox>
            <Avatar>A</Avatar>
            <MenuDots />
          </Toolbar>
          <Page>
            <Masthead>
              <LogoBox>
                <SakhaLogo />
              </LogoBox>
              <NavBar>
                {links.map((label) => (
                  <NavItem key={label}>{label}</NavItem>
                ))}
              </NavBar>
            </Masthead>
            <Body>
              <Heading>All Employees</Heading>
              <Table>
                <thead>
                  <Row>
                    {columns.map(([label, width]) => (
                      <Head key={label} $w={width}>{label}</Head>
                    ))}
                  </Row>
                </thead>
                <tbody>
                  {employees.map((fields, r) => (
                    <Row key={r} $striped={r % 2 === 0}>
                      {fields.map((value, c) => (
                        <Cell key={c}>{value}</Cell>
                      ))}
                    </Row>
                  ))}
                </tbody>
              </Table>
              <HomeLink>Home</HomeLink>
            </Body>
            <Footer>
              <div>
                <FooterTitle>Sakha EMS</FooterTitle>
                <FooterLine>Sakha Launchpad 2019</FooterLine>
              </div>
              <div>
                <FooterTitle>Find us here!</FooterTitle>
                {socials.map((label) => (
                  <FooterLine key={label}>{label}</FooterLine>
                ))}
              </div>
            </Footer>
            <Copyright>
              <span>© 2019 Copyright</span>
              <span>More Links</span>
            </Copyright>
          </Page>
          <Downloads>
            {files.map(([name, width, lead]) => (
              <DownloadItem key={name} $w={width} $lead={lead}>
                <ThumbIcon />
                <FileName>{name}</FileName>
                <ChevronUp size={16} strokeWidth={2.4} color="#8a8a88" />
              </DownloadItem>
            ))}
            <ShowAll>Show all</ShowAll>
            <BarClose size={16} strokeWidth={2.8} />
          </Downloads>
        </Browser>
      </Workspace>
    </Desktop>
  );
}
